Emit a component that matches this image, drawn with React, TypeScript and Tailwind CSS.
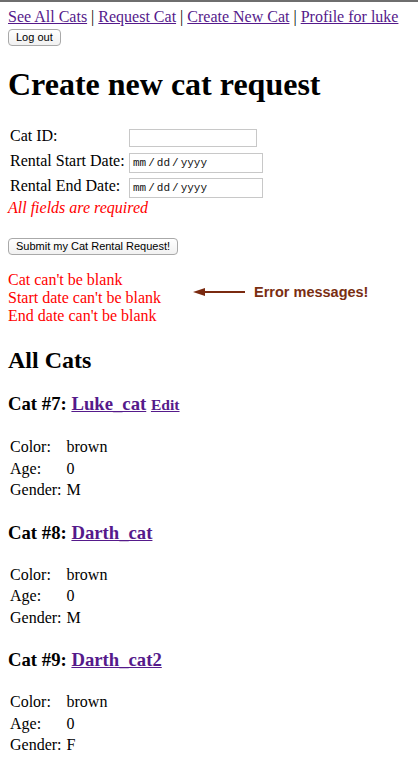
import React from "react";

const linkCls = "text-[#551a8b] underline decoration-[#551a8b]";

function DateBox() {
  return (
    <div className="mt-[3px] flex h-[20px] w-[134px] items-center border border-[#c8c8c8] bg-white pl-[3px] font-['Liberation_Mono',monospace] text-[11px] leading-none text-[#111]">
      <span>mm</span>
      <span className="mx-[2px]">/</span>
      <span>dd</span>
      <span className="mx-[2px]">/</span>
      <span>yyyy</span>
    </div>
  );
}

function Btn({ children }: { children: React.ReactNode }) {
  return (
    <button
      type="button"
      className="flex h-[17px] items-center rounded-[4px] border border-[#a9a9a9] bg-gradient-to-b from-white to-[#f1f1f1] px-[7px] font-['Liberation_Sans',Arial,sans-serif] text-[11px] leading-none text-black"
    >
      {children}
    </button>
  );
}

type Cat = { id: number; name: string; color: string; age: string; gender: string; edit?: boolean };

const cats: Cat[] = [
  { id: 7, name: "Luke_cat", color: "brown", age: "0", gender: "M", edit: true },
  { id: 8, name: "Darth_cat", color: "brown", age: "0", gender: "M" },
  { id: 9, name: "Darth_cat2", color: "brown", age: "0", gender: "F" },
];

function CatBlock({ cat, first }: { cat: Cat; first: boolean }) {
  return (
    <div className={first ? "mt-[19px]" : "mt-[21px]"}>
      <h3 className="text-[18.72px] font-bold leading-[22px]">
        Cat #{cat.id}:{" "}
        <a href="#" className={linkCls}>
          {cat.name}
        </a>
        {cat.edit && (
          <>
            {" "}
            <a href="#" className={linkCls + " text-[15.6px]"}>
              Edit
            </a>
          </>
        )}
      </h3>
      <div className="mt-[20px] ml-[2px] grid grid-cols-[56.5px_auto] leading-[21.5px]">
        <div>Color:</div>
        <div>{cat.color}</div>
        <div>Age:</div>
        <div>{cat.age}</div>
        <div>Gender:</div>
        <div>{cat.gender}</div>
      </div>
    </div>
  );
}

export default function App() {
  return (
    <div className="min-h-[766px] border-t-2 border-[#6e6e6e] bg-white px-2 pt-[6px] font-['Liberation_Serif','Times_New_Roman',serif] text-[16px] text-black">
      <nav className="leading-[18px]">
        <a href="#" className={linkCls}>See All Cats</a> |{" "}
        <a href="#" className={linkCls}>Request Cat</a> |{" "}
        <a href="#" className={linkCls}>Create New Cat</a> |{" "}
        <a href="#" className={linkCls}>Profile for luke</a>
      </nav>
      <div className="mt-[3px]">
        <Btn>Log out</Btn>
      </div>

      <h1 className="mt-[20px] text-[32px] font-bold leading-[37px]">Create new cat request</h1>

      <div className="mt-[23px] ml-[2px]">
        <div className="flex h-[24px]">
          <div className="w-[119px] pt-[1px] leading-[18px]">Cat ID:</div>
          <div className="mt-[3px] h-[18px] w-[128px] border border-[#c8c8c8] bg-white" />
        </div>
        <div className="flex h-[25px]">
          <div className="w-[119px] pt-[2px] leading-[18px]">Rental Start Date:</div>
          <DateBox />
        </div>
        <div className="flex h-[24px]">
          <div className="w-[119px] pt-[2px] leading-[18px]">Rental End Date:</div>
          <DateBox />
        </div>
      </div>
      <div className="italic leading-[18px] text-[#ff0000]">All fields are required</div>

      <div className="mt-[21px]">
        <Btn>Submit my Cat Rental Request!</Btn>
      </div>

      <div className="relative mt-[16px] leading-[18px] text-[#ff0000]">
        <div>Cat can't be blank</div>
        <div>Start date can't be blank</div>
        <div>End date can't be blank</div>
        <div className="absolute left-[185px] top-[14px] flex items-center">
          <svg width="52" height="10" viewBox="0 0 52 10" className="block">
            <polygon points="0,5 12,1 12,9" fill="#7a2a10" />
            <rect x="10" y="4" width="42" height="2" fill="#7a2a10" />
          </svg>
          <span className="ml-[9px] font-['Liberation_Sans',Arial,sans-serif] text-[14.5px] font-bold leading-none text-[#7a2e12]">
            Error messages!
          </span>
        </div>
      </div>

      <h2 className="mt-[21px] text-[24px] font-bold leading-[28px]">All Cats</h2>

      {cats.map((c, i) => (
        <CatBlock key={c.id} cat={c} first={i === 0} />
      ))}
    </div>
  );
}
